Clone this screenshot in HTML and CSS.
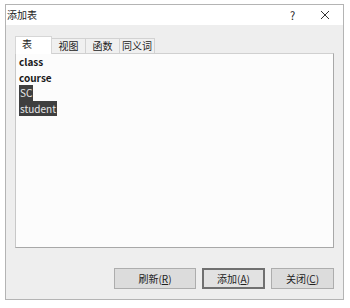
FILE: index.html
```html
<!DOCTYPE html>
<html lang="zh-CN">
<head>
  <meta charset="UTF-8">
  <title>添加表</title>
  <link rel="stylesheet" href="styles.css">
</head>
<body>

  <!-- dialog window -->
  <div class="dialog">
    <div class="titlebar">
      <span class="title">添加表</span>
      <span class="help">?</span>
      <span class="close">
        <svg width="10" height="10" viewBox="0 0 10 10"><path d="M1 1L9 9M9 1L1 9" stroke="#333" stroke-width="1" fill="none"/></svg>
      </span>
    </div>

    <div class="dialog-body">
      <div class="tabs">
        <div class="tab active">表</div>
        <div class="tab">视图</div>
        <div class="tab">函数</div>
        <div class="tab">同义词</div>
      </div>

      <div class="panel">
        <ul class="table-list">
          <li>class</li>
          <li>course</li>
          <li><span class="selected">SC</span></li>
          <li><span class="selected">student</span></li>
        </ul>
      </div>

      <div class="buttons">
        <button class="btn wide">刷新(<u>R</u>)</button>
        <button class="btn default">添加(<u>A</u>)</button>
        <button class="btn">关闭(<u>C</u>)</button>
      </div>
    </div>
  </div>

</body>
</html>
```

FILE: styles.css
```css
body { margin: 0; background: #fff; font-family: "Noto Sans CJK SC", "DejaVu Sans", sans-serif; font-size: 11px; color: #222; }
.dialog { margin: 4px 0 0 5px; width: 337px; height: 294px; border: 1px solid #b4b4b4; display: flex; flex-direction: column; }
.titlebar { height: 19px; background: #fff; display: flex; align-items: center; padding: 0 0 1px 1px; }
.title { flex: 1; font-size: 10px; }
.help { width: 20px; font-size: 11px; }
.close { width: 30px; display: flex; justify-content: center; padding-right: 3px; }
.dialog-body { flex: 1; background: #eeeeee; padding: 11px 9px 0 9px; display: flex; flex-direction: column; }
.tabs { display: flex; height: 17px; align-items: flex-end; }
.tab { height: 15px; line-height: 14px; padding: 0; text-align: center; white-space: nowrap; border: 1px solid #d2d2d2; border-bottom: none; background: #f0f0f0; font-size: 10px; margin-left: -1px; box-sizing: border-box; }
.tab:nth-child(2) { width: 35px; }
.tab:nth-child(3) { width: 35px; }
.tab:nth-child(4) { width: 36px; }
.tab.active { height: 18px; width: 37px; margin-left: 0; background: #fff; border-color: #d6d6d6; position: relative; z-index: 1; margin-bottom: -1px; text-align: left; padding-left: 6px; }
.panel { height: 193px; background: #fcfcfc; border: 1px solid #a8a8a8; border-top-color: #d0d0d0; border-left-color: #c8c8c8; }
.table-list { list-style: none; margin: 0; padding: 0 0 0 3px; }
.table-list li { height: 15.5px; line-height: 15.5px; font-size: 10px; color: #1a1a1a; font-weight: 600; }
.selected { display: inline-block; background: #3f3f3f; color: #e8e8e8; padding: 0 1px; font-weight: normal; }
.buttons { display: flex; justify-content: flex-end; gap: 6px; margin-top: 20px; }
.btn { width: 63px; height: 21px; padding: 0; background: #dcdcdc; border: 1px solid #adadad; font-family: inherit; font-size: 10px; color: #222; }
.btn.wide { width: 82px; }
.btn.default { border: 2px solid #707070; background: #e2e2e2; }
.btn u { text-decoration: underline; }
```
